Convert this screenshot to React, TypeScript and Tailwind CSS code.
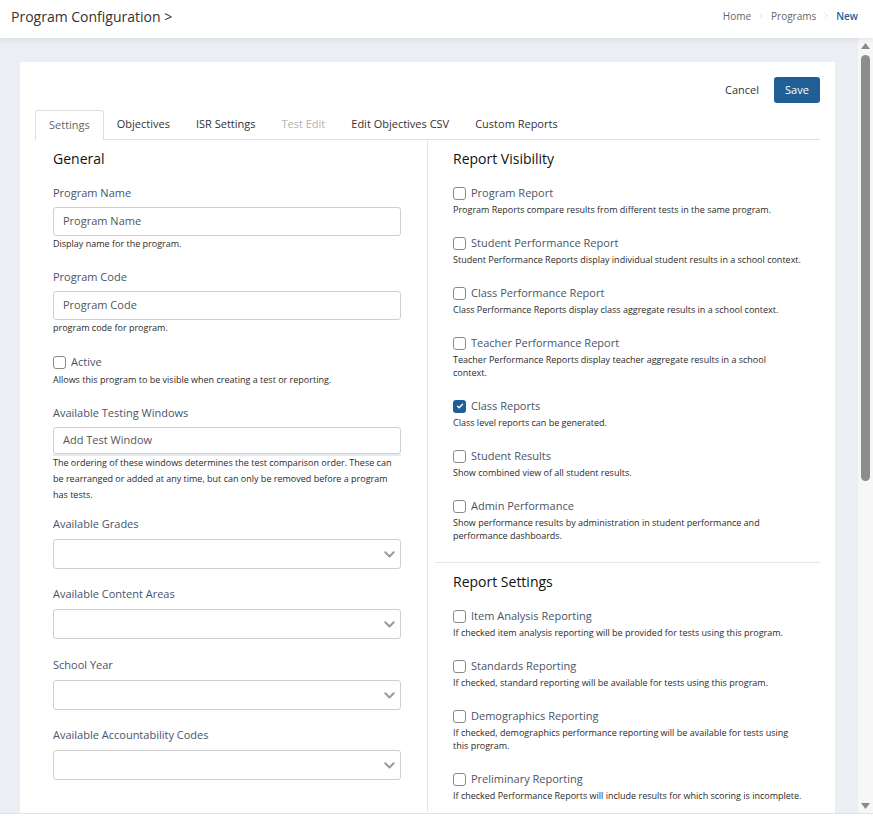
import { ChevronRight } from 'lucide-react'

const TABS = ['Settings', 'Objectives', 'ISR Settings', 'Test Edit', 'Edit Objectives CSV', 'Custom Reports']

type ReportOption = { label: string; desc: React.ReactNode; checked?: boolean }

const VISIBILITY: ReportOption[] = [
  { label: 'Program Report', desc: 'Program Reports compare results from different tests in the same program.' },
  {
    label: 'Student Performance Report',
    desc: 'Student Performance Reports display individual student results in a school context.',
  },
  { label: 'Class Performance Report', desc: 'Class Performance Reports display class aggregate results in a school context.' },
  {
    label: 'Teacher Performance Report',
    desc: (
      <>
        Teacher Performance Reports display teacher aggregate results in a school
        <br />
        context.
      </>
    ),
  },
  { label: 'Class Reports', desc: 'Class level reports can be generated.', checked: true },
  { label: 'Student Results', desc: 'Show combined view of all student results.' },
  {
    label: 'Admin Performance',
    desc: 'Show performance results by administration in student performance and performance dashboards.',
  },
]

const SETTINGS: ReportOption[] = [
  { label: 'Item Analysis Reporting', desc: 'If checked item analysis reporting will be provided for tests using this program.' },
  { label: 'Standards Reporting', desc: 'If checked, standard reporting will be available for tests using this program.' },
  {
    label: 'Demographics Reporting',
    desc: 'If checked, demographics performance reporting will be available for tests using this program.',
  },
  { label: 'Preliminary Reporting', desc: 'If checked Performance Reports will include results for which scoring is incomplete.' },
]

function Checkbox({ checked }: { checked?: boolean }) {
  return checked ? (
    <span className="flex h-[13px] w-[13px] shrink-0 items-center justify-center rounded-[3px] bg-[#1f5f99]">
      <svg width="8" height="8" viewBox="0 0 8 8" fill="none">
        <path d="M1.5 4.2 3.2 5.8 6.5 2.2" stroke="white" strokeWidth="1.4" strokeLinecap="round" strokeLinejoin="round" />
      </svg>
    </span>
  ) : (
    <span className="h-[13px] w-[13px] shrink-0 rounded-[3px] border border-[#8a8a8a] bg-white" />
  )
}

function SelectBox() {
  return (
    <div className="mt-[7px] flex h-[30px] items-center justify-end rounded-[3px] border border-[#cfcfcf] bg-white pr-[5px]">
      <svg width="11" height="7" viewBox="0 0 11 7" fill="none">
        <path d="M1.3 1.3 5.5 5.5l4.2-4.2" stroke="#9a9a9a" strokeWidth="2" strokeLinecap="round" strokeLinejoin="round" />
      </svg>
    </div>
  )
}

function TextBox({ placeholder, height = 'h-[29px]' }: { placeholder: string; height?: string }) {
  return (
    <div
      className={`mt-[6px] flex ${height} items-center rounded-[3px] border border-[#cfcfcf] bg-white px-[9px] text-[11px] text-[#555]`}
    >
      {placeholder}
    </div>
  )
}

function Label({ children, className = '' }: { children: React.ReactNode; className?: string }) {
  return <div className={`text-[11px] leading-4 text-[#47546a] ${className}`}>{children}</div>
}

function Hint({ children, className = '' }: { children: React.ReactNode; className?: string }) {
  return <p className={`text-[9px] leading-3 text-[#2b2b2b] ${className}`}>{children}</p>
}

function OptionRow({ option }: { option: ReportOption }) {
  return (
    <div className="mb-[19px] last:mb-0">
      <label className="flex items-center gap-[5px] text-[11px] leading-4 text-[#4b5566]">
        <Checkbox checked={option.checked} />
        {option.label}
      </label>
      <p className="mt-[2px] pr-[17px] text-[9px] leading-[13px] text-[#2b2b2b]">{option.desc}</p>
    </div>
  )
}

function GeneralColumn() {
  return (
    <div className="w-[392px] shrink-0 pb-6 pl-[18px] pr-[26px] pt-[9px]">
      <h2 className="text-[14px] font-medium leading-5 text-[#111]">General</h2>

      <Label className="mt-4">Program Name</Label>
      <TextBox placeholder="Program Name" />
      <Hint className="mt-[2px]">Display name for the program.</Hint>

      <Label className="mt-[19px]">Program Code</Label>
      <TextBox placeholder="Program Code" />
      <Hint className="mt-[2px]">program code for program.</Hint>

      <label className="mt-[20px] flex items-center gap-[5px] text-[11px] leading-4 text-[#47546a]">
        <Checkbox />
        Active
      </label>
      <Hint className="mt-1">Allows this program to be visible when creating a test or reporting.</Hint>

      <Label className="mt-[19px]">Available Testing Windows</Label>
      <div className="shadow-[0_2px_0_#e6ebf2]">
        <TextBox placeholder="Add Test Window" height="h-[27px]" />
      </div>
      <p className="mt-[1px] text-[9px] leading-4 text-[#2b2b2b]">
        The ordering of these windows determines the test comparison order. These can be rearranged or added at any
        time, but can only be removed before a program has tests.
      </p>

      <Label className="mt-[13px]">Available Grades</Label>
      <SelectBox />
      <Label className="mt-[17px]">Available Content Areas</Label>
      <SelectBox />
      <Label className="mt-[18px]">School Year</Label>
      <SelectBox />
      <Label className="mt-[17px]">Available Accountability Codes</Label>
      <SelectBox />
    </div>
  )
}

function ReportColumn() {
  return (
    <div className="flex-1 border-l border-[#e6e6e6] pl-[7px]">
      <div className="pb-5 pl-[18px] pt-[9px]">
        <h2 className="text-[14px] font-medium leading-5 text-[#111]">Report Visibility</h2>
        <div className="mt-4">
          {VISIBILITY.map((o) => (
            <OptionRow key={o.label} option={o} />
          ))}
        </div>
      </div>
      <div className="border-t border-[#e6e6e6] pb-[10px] pl-[18px] pt-[9px]">
        <h2 className="text-[14px] font-medium leading-5 text-[#111]">Report Settings</h2>
        <div className="mt-4">
          {SETTINGS.map((o) => (
            <OptionRow key={o.label} option={o} />
          ))}
        </div>
      </div>
    </div>
  )
}

// classic scrollbar: arrow buttons and a thumb near the top of the track
function Scrollbar() {
  return (
    <div className="flex w-[15px] shrink-0 flex-col bg-[#f7f7f7]">
      <div className="flex h-[15px] items-center justify-center">
        <svg width="9" height="6" viewBox="0 0 9 6">
          <path d="M4.5 0 9 6H0z" fill="#8a8a8a" />
        </svg>
      </div>
      <div className="mx-auto mt-[2px] h-[426px] w-[9px] rounded-full bg-[#8d8d8d]" />
      <div className="flex-1" />
      <div className="flex h-[15px] items-center justify-center">
        <svg width="9" height="6" viewBox="0 0 9 6">
          <path d="M0 0h9L4.5 6z" fill="#8a8a8a" />
        </svg>
      </div>
    </div>
  )
}

export default function App() {
  return (
    <div className="flex h-screen flex-col bg-[#ebeef3] font-['Open_Sans',sans-serif]">
      <header className="relative z-10 flex h-[38px] shrink-0 items-center justify-between bg-white pb-[6px] pl-[11px] pr-[15px] shadow-[0_2px_6px_rgba(0,0,0,0.08)]">
        <h1 className="text-[14px] text-[#333]">Program Configuration &gt;</h1>
        <nav className="flex items-center gap-[5px] text-[10px] text-[#666]">
          <span>Home</span>
          <ChevronRight size={10} strokeWidth={1.5} className="text-[#c8c8c8]" />
          <span>Programs</span>
          <ChevronRight size={10} strokeWidth={1.5} className="text-[#c8c8c8]" />
          <span className="font-semibold text-[#1f5f99]">New</span>
        </nav>
      </header>

      <main className="flex min-h-0 flex-1">
        <div className="min-w-0 flex-1 overflow-hidden">
          <div className="ml-5 mr-[23px] mt-6 min-h-[1330px] bg-white px-[15px] pt-[15px]">
            <div className="flex items-center justify-end gap-[15px]">
              <button className="text-[11px] text-[#333]">Cancel</button>
              <button className="h-[26px] w-[46px] rounded-[3px] bg-[#1f5f96] text-[11px] font-medium text-white">
                Save
              </button>
            </div>

            <div className="mt-[7px] flex h-[30px] border-b border-[#dedede] text-[11px]">
              {TABS.map((t, i) => (
                <div
                  key={t}
                  className={
                    i === 0
                      ? '-mb-px flex items-center rounded-t-[3px] border border-b-0 border-[#dedede] bg-white px-[13px] text-[#666]'
                      : t === 'Test Edit'
                        ? 'flex items-center px-[13px] text-[#b3b3b3]'
                        : 'flex items-center px-[13px] text-[#333]'
                  }
                >
                  {t}
                </div>
              ))}
            </div>

            <div className="flex">
              <GeneralColumn />
              <ReportColumn />
            </div>
          </div>
        </div>
        <Scrollbar />
      </main>

      <footer className="h-[11px] shrink-0 border-t border-[#e3e3e3] bg-white" />
    </div>
  )
}
